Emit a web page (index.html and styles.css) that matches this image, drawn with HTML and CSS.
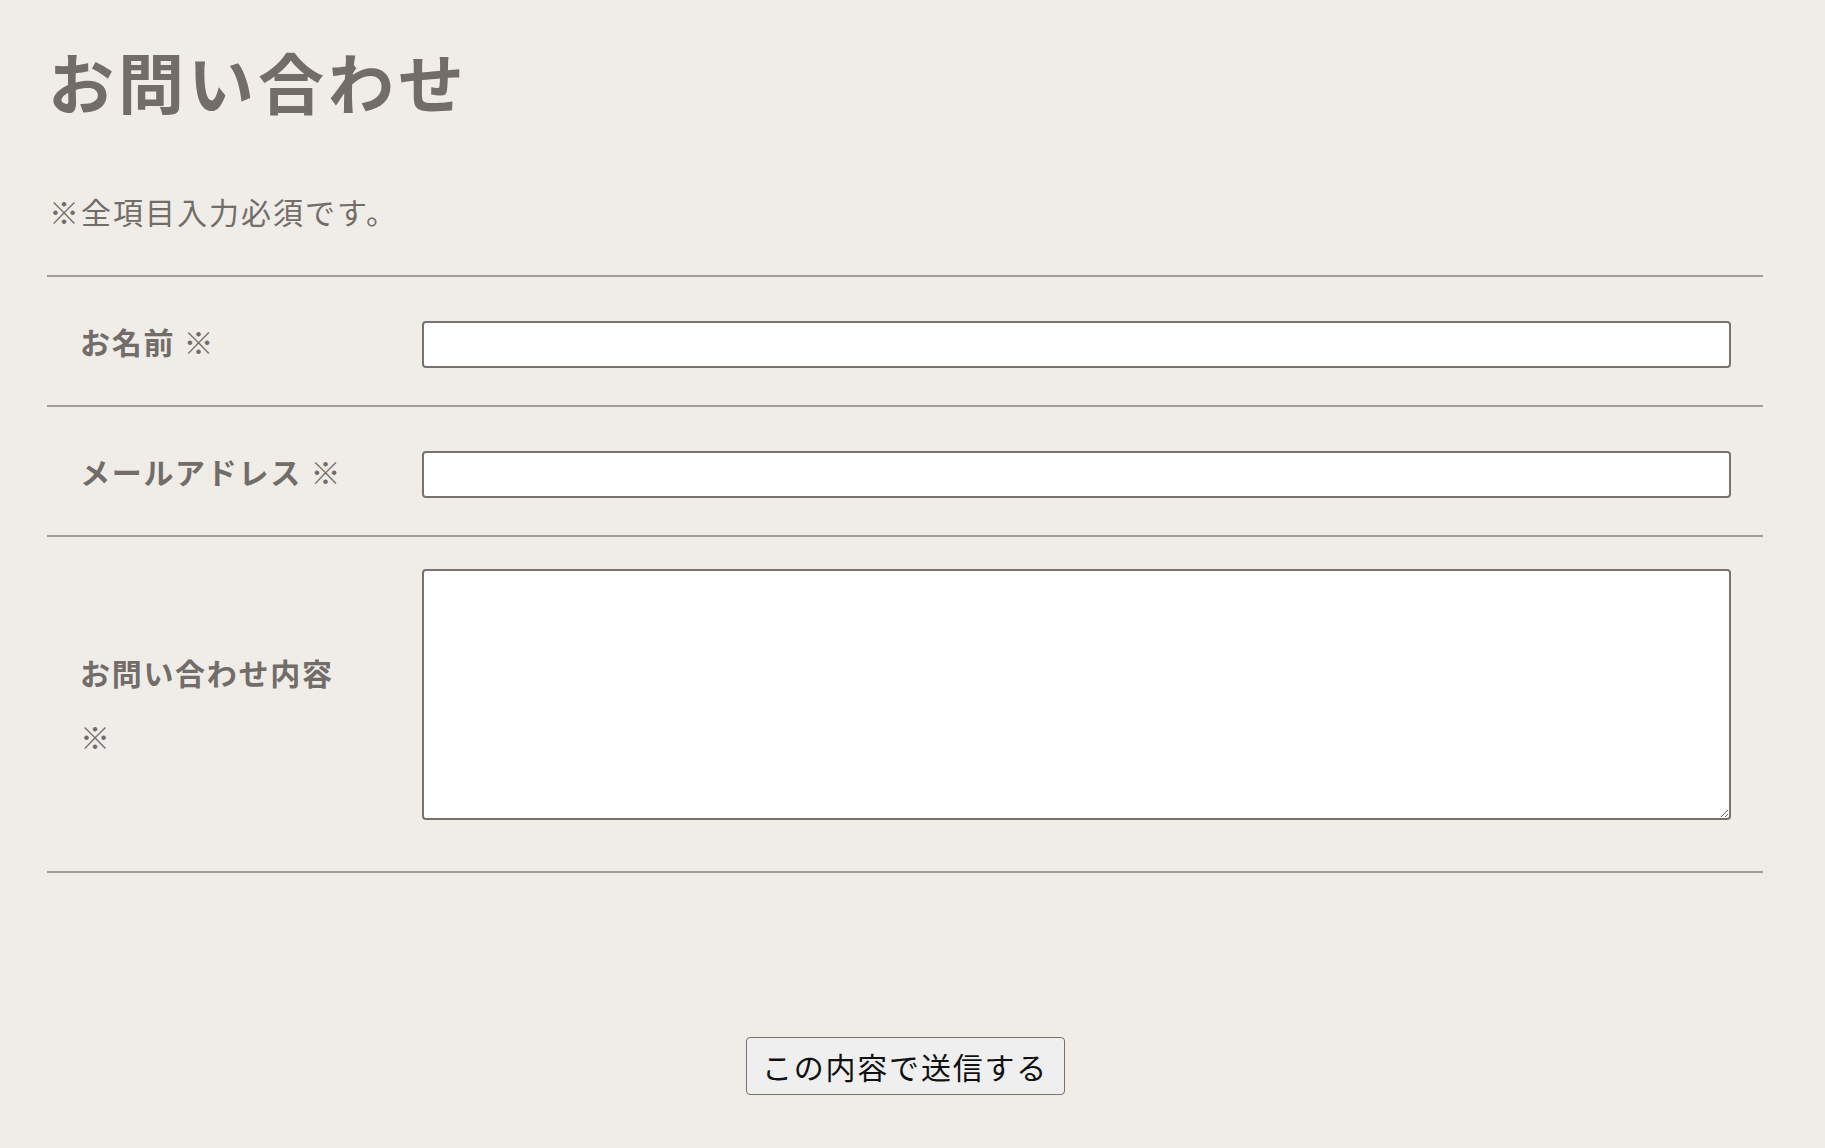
FILE: index.html
```html
<!DOCTYPE html>
<html lang="ja">
<head>
<meta charset="utf-8">
<title>お問い合わせ</title>
<link rel="stylesheet" href="styles.css">
</head>
<body>
<main class="page">
  <h1 class="title">お問い合わせ</h1>
  <p class="note">※全項目入力必須です。</p>
  <form class="form">
    <div class="row row-input">
      <label class="label" for="name">お名前 ※</label>
      <div class="field"><input class="text" id="name" type="text"></div>
    </div>
    <div class="row row-input">
      <label class="label" for="mail">メールアドレス ※</label>
      <div class="field"><input class="text" id="mail" type="email"></div>
    </div>
    <div class="row row-area">
      <label class="label" for="msg">お問い合わせ内容 ※</label>
      <div class="field"><textarea class="area" id="msg"></textarea></div>
    </div>
    <div class="actions">
      <button class="submit" type="button">この内容で送信する</button>
    </div>
  </form>
</main>
</body>
</html>
```

FILE: styles.css
```css
html, body {
  margin: 0;
  padding: 0;
  background: #f0ece8;
}

body {
  font-family: "Noto Sans CJK JP", "Noto Sans", sans-serif;
  color: #726d69;
}

.page {
  width: 1716px;
  padding: 47px 62px 0 47px;
}

.title {
  margin: 0;
  font-size: 66px;
  line-height: 1;
  font-weight: 700;
  letter-spacing: 4px;
  padding-left: 1px;
}

.note {
  margin: 83px 0 0;
  font-size: 30px;
  line-height: 1;
  letter-spacing: 2px;
  padding-left: 2px;
}

.form {
  margin-top: 49px;
}

.row {
  display: grid;
  grid-template-columns: 375px 1fr;
  border-top: 2px solid #a29c97;
}

.row-area {
  border-bottom: 2px solid #a29c97;
}

.label {
  align-self: center;
  padding-left: 33px;
  width: 270px;
  font-size: 30px;
  font-weight: 700;
  line-height: 64px;
  letter-spacing: 1.7px;
}

.row-input .field {
  padding: 44px 32px 37px 0;
}

.row-area .field {
  padding: 32px 32px 51px 0;
}

.text, .area {
  display: block;
  box-sizing: border-box;
  width: 100%;
  margin: 0;
  background: #ffffff;
  border: 2px solid #77726e;
  border-radius: 4px;
  font-family: inherit;
  font-size: 24px;
}

.text {
  height: 47px;
}

.area {
  height: 251px;
  resize: vertical;
}

.actions {
  display: flex;
  justify-content: center;
  padding: 164px 0 53px;
}

.submit {
  box-sizing: border-box;
  width: 319px;
  height: 58px;
  margin: 0;
  padding: 0;
  background: #efefef;
  border: 1.5px solid #77726e;
  border-radius: 4px;
  font-family: "Noto Sans CJK JP", sans-serif;
  font-size: 30px;
  letter-spacing: 1.8px;
  color: #111111;
}
```
